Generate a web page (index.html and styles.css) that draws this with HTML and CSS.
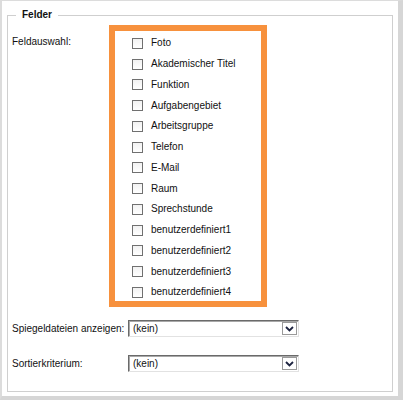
FILE: index.html
```html
<!DOCTYPE html>
<html lang="de">
<head>
<meta charset="utf-8">
<title>Felder</title>
<link rel="stylesheet" href="styles.css">
</head>
<body>
<div class="frame">
  <fieldset class="fields">
    <legend class="legend">Felder</legend>
    <div class="pick-row">
      <div class="pick-label">Feldauswahl:</div>
      <div class="highlight">
        <ul class="checklist">
          <li class="check-item"><span class="box"></span><span class="check-text">Foto</span></li>
          <li class="check-item"><span class="box"></span><span class="check-text">Akademischer Titel</span></li>
          <li class="check-item"><span class="box"></span><span class="check-text">Funktion</span></li>
          <li class="check-item"><span class="box"></span><span class="check-text">Aufgabengebiet</span></li>
          <li class="check-item"><span class="box"></span><span class="check-text">Arbeitsgruppe</span></li>
          <li class="check-item"><span class="box"></span><span class="check-text">Telefon</span></li>
          <li class="check-item"><span class="box"></span><span class="check-text">E-Mail</span></li>
          <li class="check-item"><span class="box"></span><span class="check-text">Raum</span></li>
          <li class="check-item"><span class="box"></span><span class="check-text">Sprechstunde</span></li>
          <li class="check-item"><span class="box"></span><span class="check-text">benutzerdefiniert1</span></li>
          <li class="check-item"><span class="box"></span><span class="check-text">benutzerdefiniert2</span></li>
          <li class="check-item"><span class="box"></span><span class="check-text">benutzerdefiniert3</span></li>
          <li class="check-item"><span class="box"></span><span class="check-text">benutzerdefiniert4</span></li>
        </ul>
      </div>
    </div>
    <div class="select-row first">
      <div class="select-label">Spiegeldateien anzeigen:</div>
      <div class="select">
        <span class="select-value">(kein)</span>
        <span class="select-arrow"><svg width="9" height="6" viewBox="0 0 9 6"><path d="M1 1 L4.5 4.5 L8 1" fill="none" stroke="#1d2340" stroke-width="1.8"/></svg></span>
      </div>
    </div>
    <div class="select-row">
      <div class="select-label">Sortierkriterium:</div>
      <div class="select">
        <span class="select-value">(kein)</span>
        <span class="select-arrow"><svg width="9" height="6" viewBox="0 0 9 6"><path d="M1 1 L4.5 4.5 L8 1" fill="none" stroke="#1d2340" stroke-width="1.8"/></svg></span>
      </div>
    </div>
  </fieldset>
</div>
</body>
</html>
```
FILE: styles.css
```css
html, body {
  margin: 0;
  padding: 0;
  background: #ffffff;
}
body {
  width: 403px;
  height: 400px;
  overflow: hidden;
  font-family: "Liberation Sans", Arial, sans-serif;
  font-size: 10px;
  color: #111111;
}
.frame {
  box-sizing: border-box;
  width: 403px;
  height: 400px;
  border-left: 2px solid #dcdcdc;
  border-top: 1px solid #dcdcdc;
  border-right: 5px solid #d6d6d6;
  border-bottom: 4px solid #d6d6d6;
  padding: 8px 0 0 5px;
  background: #ffffff;
}
.fields {
  box-sizing: border-box;
  width: 386px;
  margin: 0;
  border: 1px solid #cfcfcf;
  padding: 4px 0 19px 4px;
}
.legend {
  margin-left: 4px;
  padding: 0 6px;
  font-weight: bold;
  font-size: 10px;
  line-height: 12px;
  color: #111111;
}
.pick-row {
  display: flex;
}
.pick-label {
  width: 97px;
  padding-top: 11px;
  line-height: 12px;
}
.highlight {
  box-sizing: border-box;
  width: 158px;
  height: 282px;
  border: 6px solid #f7913d;
  background: #ffffff;
}
.checklist {
  list-style: none;
  margin: 0;
  padding: 2px 0 0 17px;
}
.check-item {
  display: flex;
  align-items: center;
  height: 20.75px;
}
.box {
  box-sizing: border-box;
  width: 11px;
  height: 11px;
  border: 1px solid #707070;
  background: linear-gradient(#f2f2f2, #ffffff);
  flex: none;
}
.check-text {
  margin-left: 8px;
  line-height: 12px;
}
.select-row {
  display: flex;
  align-items: center;
  margin-top: 18px;
}
.select-row.first {
  margin-top: 13px;
}
.select-label {
  width: 116px;
  line-height: 12px;
}
.select {
  box-sizing: border-box;
  width: 171px;
  height: 17px;
  display: flex;
  align-items: center;
  justify-content: space-between;
  border: 1px solid;
  border-color: #6a6a6a #e2e2e2 #e2e2e2 #6a6a6a;
  box-shadow: inset 1px 1px 0 #a8a8a8;
  background: #ffffff;
  padding: 0 1px 0 4px;
}
.select-value {
  line-height: 12px;
}
.select-arrow {
  box-sizing: border-box;
  width: 15px;
  height: 13px;
  border: 1px solid #9a9a9a;
  background: #ffffff;
  display: flex;
  align-items: center;
  justify-content: center;
}
.select-arrow svg {
  display: block;
}
```
